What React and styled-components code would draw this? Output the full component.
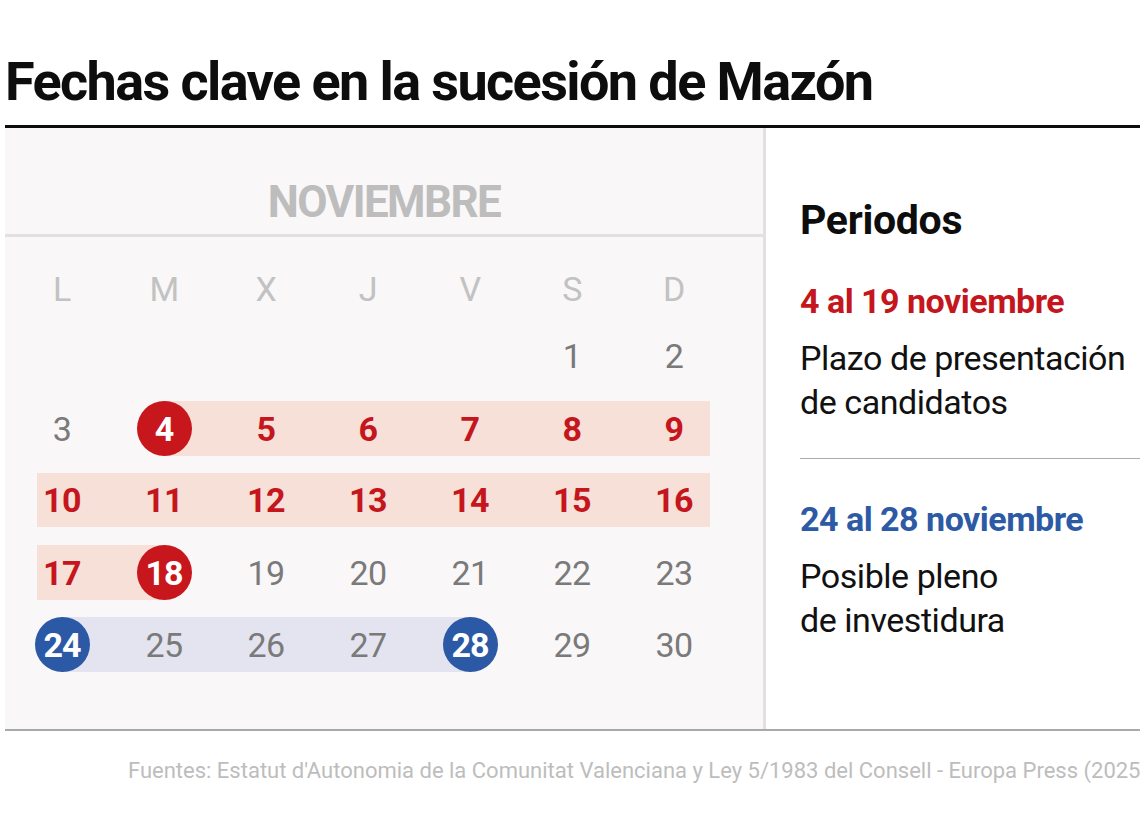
import React from "react";
import styled, { createGlobalStyle } from "styled-components";

const GlobalStyle = createGlobalStyle`
  html, body {
    margin: 0;
    padding: 0;
    background: #ffffff;
  }
  body {
    font-family: Roboto, "Liberation Sans", Arial, sans-serif;
    -webkit-font-smoothing: antialiased;
  }
`;

const Page = styled.div`
  width: 1140px;
  height: 815px;
  padding-left: 5px;
  box-sizing: border-box;
  overflow: hidden;
`;

const Header = styled.header`
  padding-top: 55px;
  padding-bottom: 16px;
  border-bottom: 3px solid #0d0d0d;
`;

const Title = styled.h1`
  margin: 0;
  font-size: 54px;
  line-height: 1;
  font-weight: 700;
  letter-spacing: -1.6px;
  color: #0d0d0d;
`;

const Body = styled.div`
  display: flex;
  height: 603px;
  border-bottom: 2px solid #a9a9a9;
  box-sizing: border-box;
`;

const Calendar = styled.section`
  width: 758px;
  background: #f9f7f8;
  border-right: 3px solid #e2e0e1;
`;

const Month = styled.div`
  height: 109px;
  box-sizing: border-box;
  padding-top: 52px;
  border-bottom: 3px solid #e2e0e1;
  text-align: center;
  font-size: 44px;
  line-height: 1;
  font-weight: 700;
  letter-spacing: -1.6px;
  color: #bdbdbd;
`;

const Grid = styled.div`
  padding: 25px 0 0 6px;
  display: flex;
  flex-direction: column;
  gap: 18px;
`;

const Row = styled.div`
  display: grid;
  grid-template-columns: repeat(7, 102px);
  height: 54px;
  margin-bottom: ${({ $after }) => ($after ? `${$after}px` : "0")};
`;

const Band = styled.div`
  grid-row: 1;
  grid-column: ${({ $from, $to }) => `${$from} / ${$to}`};
  margin-left: ${({ $ml }) => $ml}px;
  margin-right: ${({ $mr }) => $mr}px;
  background: ${({ $tone }) => ($tone === "blue" ? "#e3e4f0" : "#f7e0d8")};
`;

const Cell = styled.div`
  grid-row: 1;
  grid-column: ${({ $col }) => $col};
  display: flex;
  align-items: center;
  justify-content: center;
  font-size: 34px;
  line-height: 1;
  letter-spacing: -0.5px;
  position: relative;
  z-index: 1;
  font-weight: ${({ $kind }) => ($kind === "plain" || $kind === "head" ? 400 : 700)};
  color: ${({ $kind }) =>
    $kind === "head"
      ? "#c2c2c2"
      : $kind === "red"
      ? "#c4161c"
      : $kind === "plain"
      ? "#7a7a7a"
      : "#ffffff"};
`;

const Circle = styled.span`
  width: 55px;
  height: 55px;
  border-radius: 50%;
  display: flex;
  align-items: center;
  justify-content: center;
  background: ${({ $tone }) => ($tone === "blue" ? "#2b59a6" : "#c8161d")};
  color: #ffffff;
  font-weight: 700;
  letter-spacing: -1px;
`;

const Side = styled.aside`
  flex: 1;
  padding: 72px 0 0 34px;
`;

const SideTitle = styled.h2`
  margin: 0 0 43px;
  font-size: 41px;
  line-height: 1;
  font-weight: 700;
  letter-spacing: -0.3px;
  color: #0d0d0d;
`;

const Period = styled.div`
  font-size: 34px;
  line-height: 1;
  font-weight: 700;
  letter-spacing: -0.5px;
  color: ${({ $tone }) => ($tone === "blue" ? "#2d5aa5" : "#c4161c")};
  margin-bottom: 18px;
`;

const Desc = styled.p`
  margin: 0;
  font-size: 34px;
  line-height: 44px;
  font-weight: 400;
  letter-spacing: -0.45px;
  color: #111111;
`;

const Divider = styled.hr`
  margin: 34px 0 43px;
  border: 0;
  border-top: 1.5px solid #ababab;
`;

const Footer = styled.footer`
  padding: 29px 0 0 123px;
  font-size: 22px;
  line-height: 1;
  letter-spacing: 0;
  color: #bdbdbd;
  white-space: nowrap;
`;

const weekdays = ["L", "M", "X", "J", "V", "S", "D"];

const weeks = [
  { days: [null, null, null, null, null, ["1", "plain"], ["2", "plain"]] },
  {
    band: { from: 2, to: 8, ml: 51, mr: 15, tone: "red" },
    days: [
      ["3", "plain"],
      ["4", "redCircle"],
      ["5", "red"],
      ["6", "red"],
      ["7", "red"],
      ["8", "red"],
      ["9", "red"],
    ],
  },
  {
    band: { from: 1, to: 8, ml: 26, mr: 15, tone: "red" },
    days: ["10", "11", "12", "13", "14", "15", "16"].map((d) => [d, "red"]),
  },
  {
    band: { from: 1, to: 3, ml: 26, mr: 51, tone: "red" },
    days: [
      ["17", "red"],
      ["18", "redCircle"],
      ["19", "plain"],
      ["20", "plain"],
      ["21", "plain"],
      ["22", "plain"],
      ["23", "plain"],
    ],
  },
  {
    band: { from: 1, to: 6, ml: 51, mr: 51, tone: "blue" },
    days: [
      ["24", "blueCircle"],
      ["25", "plain"],
      ["26", "plain"],
      ["27", "plain"],
      ["28", "blueCircle"],
      ["29", "plain"],
      ["30", "plain"],
    ],
  },
];

const Day = ({ day, col }) => {
  if (!day) return null;
  const [d, kind] = day;
  if (kind === "redCircle" || kind === "blueCircle") {
    return (
      <Cell $col={col} $kind="circle">
        <Circle $tone={kind === "blueCircle" ? "blue" : "red"}>{d}</Circle>
      </Cell>
    );
  }
  return (
    <Cell $col={col} $kind={kind}>
      {d}
    </Cell>
  );
};

export default function App() {
  return (
    <Page>
      <GlobalStyle />
      <Header>
        <Title>Fechas clave en la sucesión de Mazón</Title>
      </Header>
      <Body>
        <Calendar>
          <Month>NOVIEMBRE</Month>
          <Grid>
            <Row $after={-5}>
              {weekdays.map((w, i) => (
                <Cell key={w} $col={i + 1} $kind="head">
                  {w}
                </Cell>
              ))}
            </Row>
            {weeks.map((week, r) => (
              <Row key={r}>
                {week.band && (
                  <Band
                    $from={week.band.from}
                    $to={week.band.to}
                    $ml={week.band.ml}
                    $mr={week.band.mr}
                    $tone={week.band.tone}
                  />
                )}
                {week.days.map((day, i) => (
                  <Day key={i} day={day} col={i + 1} />
                ))}
              </Row>
            ))}
          </Grid>
        </Calendar>
        <Side>
          <SideTitle>Periodos</SideTitle>
          <Period $tone="red">4 al 19 noviembre</Period>
          <Desc>
            Plazo de presentación
            <br />
            de candidatos
          </Desc>
          <Divider />
          <Period $tone="blue">24 al 28 noviembre</Period>
          <Desc>
            Posible pleno
            <br />
            de investidura
          </Desc>
        </Side>
      </Body>
      <Footer>
        Fuentes: Estatut d'Autonomia de la Comunitat Valenciana y Ley 5/1983 del Consell - Europa Press (2025)
      </Footer>
    </Page>
  );
}
